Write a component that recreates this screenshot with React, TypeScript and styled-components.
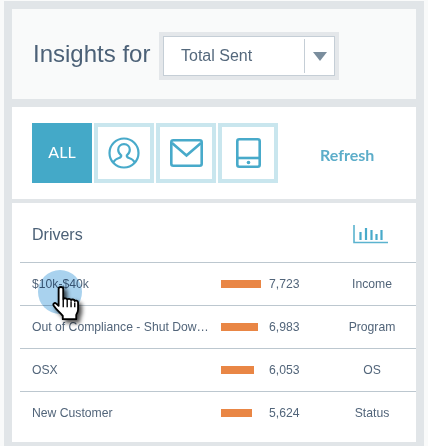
import styled, { createGlobalStyle } from "styled-components";

const GlobalStyle = createGlobalStyle`
  html, body {
    margin: 0;
    padding: 0;
    background: #f9fafa;
  }
`;

const Page = styled.div`
  position: relative;
  box-sizing: border-box;
  width: 420px;
  height: 445px;
  margin: 1px 0 0 4px;
  padding: 8px 8px 4px;
  display: flex;
  flex-direction: column;
  background: #e1e5e8;
  font-family: "Liberation Sans", Arial, sans-serif;
  color: #52657a;
`;

const Header = styled.section`
  box-sizing: border-box;
  height: 90px;
  flex: none;
  display: flex;
  align-items: center;
  gap: 8px;
  margin-bottom: 8px;
  padding: 4px 0 0 21px;
  background: #f9fafa;
`;

const Title = styled.h1`
  width: 118px;
  margin: 0 0 4px;
  font-size: 24px;
  font-weight: 400;
  line-height: 28px;
  white-space: nowrap;
  color: #4c6177;
`;

const SelectFrame = styled.div`
  box-sizing: border-box;
  width: 180px;
  height: 48px;
  border: 4px solid #e4e7ea;
`;

const SelectBox = styled.div`
  box-sizing: border-box;
  height: 40px;
  display: flex;
  align-items: center;
  border: 1px solid #c5ced6;
  background: #fff;
`;

const SelectValue = styled.span`
  flex: 1;
  padding-left: 17px;
  font-size: 16px;
  color: #54687c;
`;

const SelectToggle = styled.span`
  box-sizing: border-box;
  width: 30px;
  height: 34px;
  display: flex;
  align-items: center;
  justify-content: center;
  border-left: 1px solid #c5ced6;
`;

const Arrow = styled.span`
  width: 0;
  height: 0;
  margin-top: 1px;
  border-left: 7px solid transparent;
  border-right: 7px solid transparent;
  border-top: 9px solid #7a8d9d;
`;

const TabsPanel = styled.section`
  box-sizing: border-box;
  height: 92px;
  flex: none;
  display: flex;
  align-items: flex-start;
  margin-bottom: 4px;
  padding: 16px 0 0 20px;
  background: #fff;
`;

const Tabs = styled.div`
  display: flex;
  gap: 2px;
`;

const Tab = styled.div<{ $active?: boolean }>`
  box-sizing: border-box;
  width: 60px;
  height: 60px;
  display: flex;
  align-items: center;
  justify-content: center;
  border: 4px solid ${(p) => (p.$active ? "#44a9c8" : "#c9e6ee")};
  background: ${(p) => (p.$active ? "#44a9c8" : "#fff")};
`;

const TabLabel = styled.span`
  margin-bottom: 3px;
  font-family: Lato, sans-serif;
  font-size: 16px;
  font-weight: 400;
  color: #fff;
`;

const Refresh = styled.span`
  margin: 22px 0 0 42px;
  font-family: Lato, sans-serif;
  font-size: 16px;
  font-weight: 700;
  line-height: 19px;
  color: #5cadc9;
`;

const DriversPanel = styled.section`
  flex: 1;
  padding-left: 8px;
  background: #fff;
`;

const DriversHeader = styled.div`
  box-sizing: border-box;
  height: 59px;
  display: flex;
  align-items: center;
  justify-content: space-between;
  padding: 4px 28px 0 12px;
`;

const DriversTitle = styled.h2`
  margin: 0;
  font-size: 16px;
  font-weight: 400;
  color: #4c6177;
`;

const Row = styled.div`
  box-sizing: border-box;
  height: 43px;
  display: grid;
  grid-template-columns: 189px 48px 65px 1fr;
  align-items: center;
  padding-left: 12px;
  border-top: 1px solid #bcc7cf;
  font-size: 12.2px;
  color: #52657a;
`;

const RowName = styled.span`
  white-space: nowrap;
`;

const Bar = styled.div`
  height: 8px;
  background: #e98645;
`;

const RowValue = styled.span`
  font-size: 12.2px;
`;

const RowType = styled.span`
  text-align: center;
  padding-right: 6px;
`;

const CursorBubble = styled.div`
  position: absolute;
  left: 34px;
  top: 269px;
  width: 44px;
  height: 44px;
  border-radius: 50%;
  background: #a9d2ee;
  mix-blend-mode: multiply;
`;

const HandCursor = styled.svg`
  position: absolute;
  left: 48px;
  top: 285px;
  width: 28px;
  height: 35px;
  filter: drop-shadow(3px 3px 2px rgba(0, 0, 0, 0.7));
`;

const drivers = [
  { name: "$10k-$40k", width: 40, value: "7,723", type: "Income" },
  { name: "Out of Compliance - Shut Dow…", width: 37, value: "6,983", type: "Program" },
  { name: "OSX", width: 33, value: "6,053", type: "OS" },
  { name: "New Customer", width: 31, value: "5,624", type: "Status" },
];

export default function App() {
  return (
    <>
      <GlobalStyle />
      <Page>
        <Header>
          <Title>Insights for</Title>
          <SelectFrame>
            <SelectBox>
              <SelectValue>Total Sent</SelectValue>
              <SelectToggle>
                <Arrow />
              </SelectToggle>
            </SelectBox>
          </SelectFrame>
        </Header>

        <TabsPanel>
          <Tabs>
            <Tab $active>
              <TabLabel>ALL</TabLabel>
            </Tab>
            <Tab>
              <svg width="32" height="32" viewBox="0 0 32 32" fill="none" stroke="#48aaca" strokeWidth="2.2">
                <circle cx="16" cy="16" r="14.5" />
                <path d="M5.5 25.5c.8-2.6 2.8-3.6 5.5-4.5 1.8-.6 2.4-1.3 2.2-2.6-1.6-1.2-3-3.2-3-5.6 0-3.4 2.4-5.6 5.8-5.6s5.8 2.2 5.8 5.6c0 2.4-1.4 4.4-3 5.6-.2 1.3.4 2 2.2 2.6 2.7.9 4.7 1.9 5.5 4.5" />
              </svg>
            </Tab>
            <Tab>
              <svg width="33" height="28" viewBox="0 0 33 28" fill="none" stroke="#48aaca" strokeWidth="2.6">
                <rect x="1.3" y="1.3" width="30.4" height="25.4" rx="2" />
                <path d="M2 4l14.5 12.5L31 4" />
              </svg>
            </Tab>
            <Tab>
              <svg width="25" height="30" viewBox="0 0 25 30" fill="none" stroke="#48aaca" strokeWidth="2.6">
                <rect x="1.3" y="1.3" width="22.4" height="27.4" rx="2" />
                <path d="M2 20h21" />
                <circle cx="12.5" cy="24.5" r="1.8" fill="#48aaca" stroke="none" />
              </svg>
            </Tab>
          </Tabs>
          <Refresh>Refresh</Refresh>
        </TabsPanel>

        <DriversPanel>
          <DriversHeader>
            <DriversTitle>Drivers</DriversTitle>
            <svg width="35" height="19" viewBox="0 0 35 19" fill="none">
              <path d="M1 0v17.5h34" stroke="#5bb3cf" strokeWidth="1.6" />
              <path d="M7.5 7v8M13 3v12M18.5 5v10M23.5 9v6M28.5 5v10" stroke="#48aaca" strokeWidth="2.2" />
            </svg>
          </DriversHeader>
          {drivers.map((d) => (
            <Row key={d.name}>
              <RowName>{d.name}</RowName>
              <div>
                <Bar style={{ width: d.width }} />
              </div>
              <RowValue>{d.value}</RowValue>
              <RowType>{d.type}</RowType>
            </Row>
          ))}
        </DriversPanel>

        <CursorBubble />
        <HandCursor viewBox="0 0 30 38">
          <path
            d="M7 3c0-2.6 5-2.6 5 0v11.5c.4-1.6 4-1.6 4.3.4.4-1.4 4-1.4 4.2.6.4-1.2 3.8-1.2 4 .8.4-.8 3.6-.6 3.6 1.6v7.6c0 2.4-1 3.9-2 5.8V36H11.5v-3.5C8 28 4.5 26 1.7 21.5c-1.3-2.2 1-4 2.7-2.4L7 21.5V3z"
            fill="#fff"
            stroke="#000"
            strokeWidth="2"
            strokeLinejoin="round"
          />
          <path d="M12 15v8M16.3 15.5v7.5M20.5 16.5v6.5M24.5 18v5" stroke="#000" strokeWidth="1.5" fill="none" />
        </HandCursor>
      </Page>
    </>
  );
}
